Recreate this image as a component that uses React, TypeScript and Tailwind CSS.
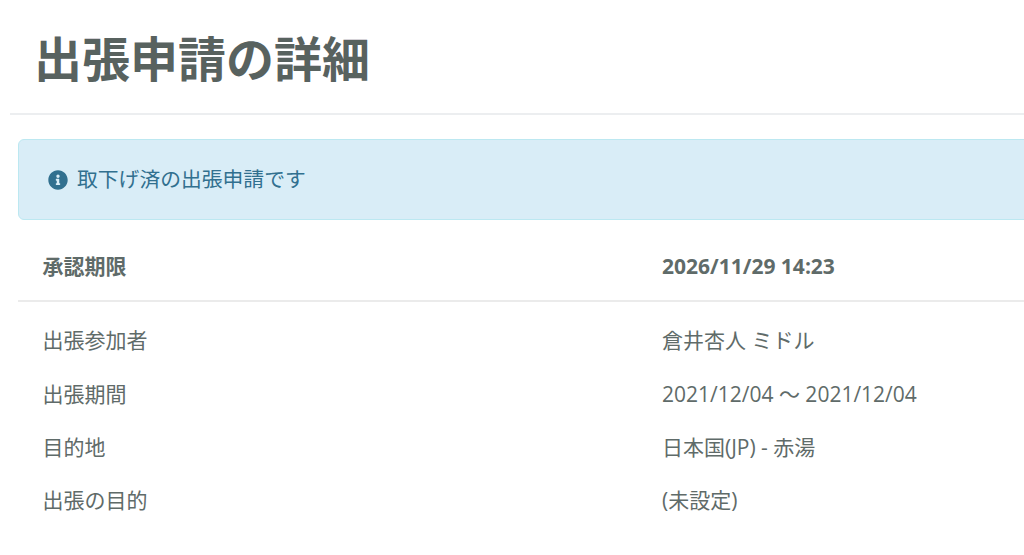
import { FaInfoCircle } from "react-icons/fa";

function Row({ a, b }: { a: string; b: string }) {
  return (
    <div className="flex h-[53.3px] items-center">
      <div className="w-[644px] pl-[24.5px] shrink-0">{a}</div>
      <div className="whitespace-nowrap">{b}</div>
    </div>
  );
}
export default function App() {
  return (
    <div className="w-[1024px] h-[555px] overflow-hidden bg-white text-[#5f6b69] text-[21px] font-['Open_Sans','Noto_Sans_CJK_JP',sans-serif]">
      <div className="ml-[10px] h-[115px] border-b-2 border-[#eceef0] flex items-center pl-[24px] pt-[4px]">
        <h1 className="text-[48px] font-bold text-[#58625f]">出張申請の詳細</h1>
      </div>
      <div className="ml-[18px] mt-[24px] h-[81px] w-[1030px] bg-[#d9edf7] border border-[#bce8f1] rounded-[6px] flex items-center pl-[28.5px] text-[20.8px] text-[#31708f]">
        <FaInfoCircle className="mr-[9.5px] w-[20px] h-[20px]" />
        <span>取下げ済の出張申請です</span>
      </div>
      <div className="ml-[18px] h-[82px] border-b-2 border-[#ebebeb] flex items-center font-bold pt-[14px]">
        <div className="w-[644px] pl-[24.5px] shrink-0">承認期限</div>
        <div>2026/11/29 14:23</div>
      </div>
      <div className="ml-[18px] pt-[12.5px]">
        <Row a="出張参加者" b="倉井杏人 ミドル" />
        <Row a="出張期間" b="2021/12/04 〜 2021/12/04" />
        <Row a="目的地" b="日本国(JP) - 赤湯" />
        <Row a="出張の目的" b="(未設定)" />
      </div>
    </div>
  );
}
